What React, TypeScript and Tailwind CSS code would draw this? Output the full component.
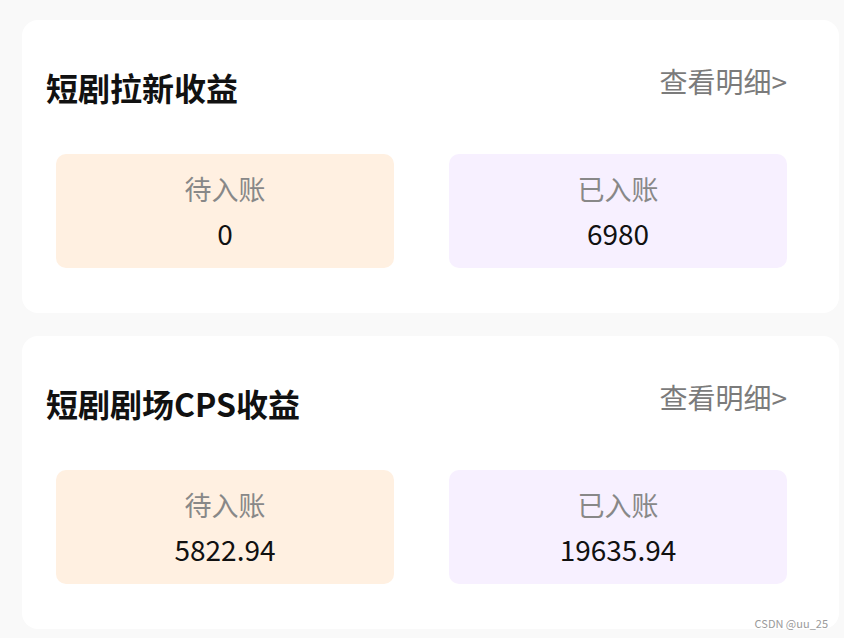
const font = { fontFamily: '"Noto Sans CJK SC", "Noto Sans", sans-serif' };

interface IncomeCardProps {
  title: string;
  pending: string;
  settled: string;
}

function IncomeCard({ title, pending, settled }: IncomeCardProps) {
  return (
    <section className="bg-white rounded-[16px] pt-[47px] pb-[45px] pl-[24px] pr-[52px]">
      {/* Header */}
      <div className="flex items-start justify-between">
        <h2 className="text-[32px] leading-[40px] font-bold text-[#111]">{title}</h2>
        <button className="text-[28px] leading-[32px] text-[#7b7b7b] -mt-[2px]">查看明细&gt;</button>
      </div>

      {/* Amounts */}
      <div className="mt-[47px] ml-[10px] grid grid-cols-2 gap-[55px]">
        <div className="h-[114px] rounded-[10px] bg-[#fff0e1] flex flex-col items-center pt-[19px]">
          <span className="text-[27px] leading-[32px] text-[#888]">待入账</span>
          <span className="mt-[12px] text-[28px] leading-[32px] text-[#111]">{pending}</span>
        </div>
        <div className="h-[114px] rounded-[10px] bg-[#f7f0ff] flex flex-col items-center pt-[19px]">
          <span className="text-[27px] leading-[32px] text-[#888]">已入账</span>
          <span className="mt-[12px] text-[28px] leading-[32px] text-[#111]">{settled}</span>
        </div>
      </div>
    </section>
  );
}

export default function App() {
  return (
    <div className="relative w-[844px] h-[638px] bg-[#f9f9f9] pt-[20px] pl-[22px] pr-[5px]" style={font}>
      <div className="flex flex-col gap-[23px]">
        <IncomeCard title="短剧拉新收益" pending="0" settled="6980" />
        <IncomeCard title="短剧剧场CPS收益" pending="5822.94" settled="19635.94" />
      </div>
      <span className="absolute right-[16px] bottom-[9px] text-[11px] leading-[12px] text-[#9a9a9a]">CSDN @uu_25</span>
    </div>
  );
}
